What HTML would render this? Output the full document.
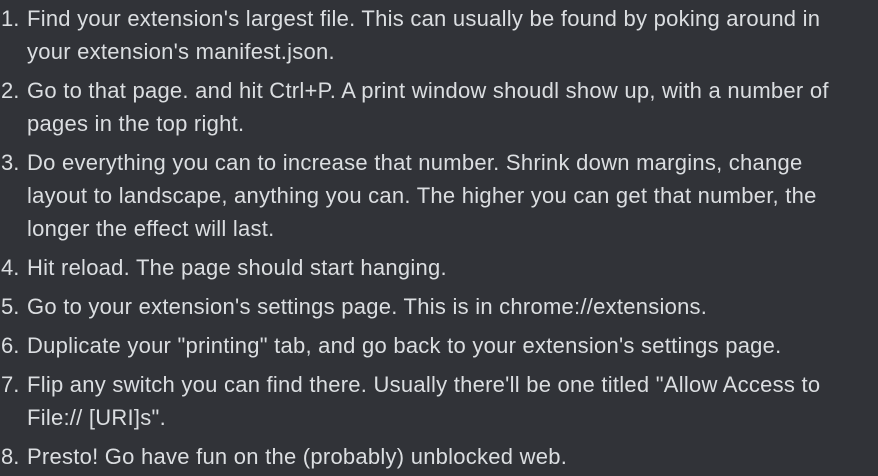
<!DOCTYPE html>
<html><head><meta charset="utf-8"><style>
html,body{margin:0;padding:0;background:#313338;width:878px;height:476px;overflow:hidden}
body{font-family:"Liberation Sans","DejaVu Sans",sans-serif;color:#dbdee1;font-size:22px;letter-spacing:0.25px}
.it{position:relative;padding-left:27px;line-height:33px;margin-bottom:6px;white-space:nowrap}
.n{position:absolute;left:1px;top:0;letter-spacing:0}
.wrap{padding-top:2px}
</style></head><body><div class="wrap">
<div class="it"><span class="n">1.</span>Find your extension's largest file. This can usually be found by poking around in<br>your extension's manifest.json.</div>
<div class="it"><span class="n">2.</span>Go to that page. and hit Ctrl+P. A print window shoudl show up, with a number of<br>pages in the top right.</div>
<div class="it"><span class="n">3.</span>Do everything you can to increase that number. Shrink down margins, change<br>layout to landscape, anything you can. The higher you can get that number, the<br>longer the effect will last.</div>
<div class="it"><span class="n">4.</span>Hit reload. The page should start hanging.</div>
<div class="it"><span class="n">5.</span>Go to your extension's settings page. This is in chrome://extensions.</div>
<div class="it"><span class="n">6.</span>Duplicate your "printing" tab, and go back to your extension's settings page.</div>
<div class="it"><span class="n">7.</span>Flip any switch you can find there. Usually there'll be one titled "Allow Access to<br>File:// [URI]s".</div>
<div class="it"><span class="n">8.</span>Presto! Go have fun on the (probably) unblocked web.</div>
</div></body></html>
